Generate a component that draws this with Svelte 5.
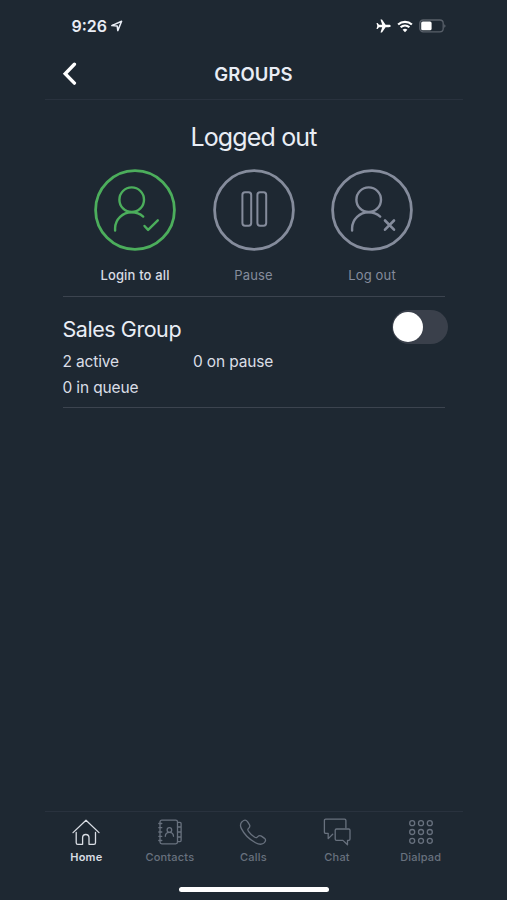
<script lang="ts">
  type Action = { id: string; label: string; tone: string };
  type Group = { name: string; active: number; paused: number; queued: number; enabled: boolean };

  const actions: Action[] = [
    { id: 'login', label: 'Login to all', tone: 'primary' },
    { id: 'pause', label: 'Pause', tone: 'muted' },
    { id: 'logout', label: 'Log out', tone: 'muted' },
  ];

  const tabs = ['Home', 'Contacts', 'Calls', 'Chat', 'Dialpad'];
  const dots = [5.2, 14, 22.8];

  let groups: Group[] = $state([
    { name: 'Sales Group', active: 2, paused: 0, queued: 0, enabled: false },
  ]);
  let currentTab = $state('Home');
</script>

<div class="screen">
  <div class="phone">
    <div class="status-bar">
      <div class="time">
        <span>9:26</span>
        <svg width="12" height="12" viewBox="0 0 12 12">
          <path d="M.8 5.6 10.6 1.3 6.8 10.6 6.200 6Z" />
        </svg>
      </div>
      <div class="indicators">
        <svg class="plane" width="15" height="14" viewBox="0 0 15 14">
          <path d="M14.7 7c0-.8-.8-1.2-1.8-1.2H9.6L6 .4H4.5l1.7 5.4H3L1.6 4H.5l.8 3-.8 3h1.1L3 8.2h3.2l-1.7 5.4H6l3.6-5.4h3.3c1 0 1.8-.4 1.8-1.2z" />
        </svg>
        <svg class="wifi" width="16" height="13" viewBox="0 0 16 13">
          <path d="M1.1 4.6C5 .9 11 .9 14.9 4.6M3.6 7.3c2.5-2.3 6.3-2.3 8.8 0" />
          <path class="fill" d="M8 12.2 5.6 9.7c1.4-1.2 3.4-1.2 4.8 0z" />
        </svg>
        <svg class="battery" width="27" height="14" viewBox="0 0 27 14">
          <rect class="case" x=".8" y="1" width="23.4" height="11.8" rx="3.4" />
          <rect class="level" x="2.2" y="2.5" width="10.4" height="8.8" rx="1.6" />
          <path class="cap" d="M25.2 5.2c1.8.5 1.8 3 0 3.5z" />
        </svg>
      </div>
    </div>

    <header>
      <button class="back" aria-label="Back">
        <svg width="16" height="24" viewBox="0 0 16 24">
          <path d="M13.4 2.300 4.200 11.700l9.200 9.400" />
        </svg>
      </button>
      <h1>GROUPS</h1>
    </header>

    <main>
      <h2>Logged out</h2>

      <div class="actions">
        {#each actions as action}
          <button class="action {action.tone}">
            <svg width="82" height="82" viewBox="0 0 82 82">
              <circle class="ring" cx="41" cy="41" r="39.4" />
              {#if action.id === 'pause'}
                <rect class="bar" x="29.4" y="23.3" width="8.8" height="33.4" rx="2.6" />
                <rect class="bar" x="44.4" y="23.3" width="8.8" height="33.4" rx="2.6" />
              {:else}
                <circle cx="37.7" cy="30.7" r="12.3" />
                <path d="M21.1 61.5V59c.3-8.7 7.5-15.7 16.6-15.7 4.3 0 8.3 1.5 11.5 4.3" />
                {#if action.id === 'login'}
                  <path d="m50.5 57 3.600 3.900 9.700-9.600" />
                {:else}
                  <path class="cross" d="m54 51.500 9 9.200m0-9.200-9 9.200" />
                {/if}
              {/if}
            </svg>
            <span>{action.label}</span>
          </button>
        {/each}
      </div>

      {#each groups as group}
        <section class="group">
          <div class="group-head">
            <h3>{group.name}</h3>
            <button
              class="switch"
              class:on={group.enabled}
              role="switch"
              aria-checked={group.enabled}
              aria-label={group.name}
              onclick={() => (group.enabled = !group.enabled)}
            >
              <span class="knob"></span>
            </button>
          </div>
          <div class="stats">
            <span>{group.active} active</span>
            <span>{group.paused} on pause</span>
            <span>{group.queued} in queue</span>
          </div>
        </section>
      {/each}
    </main>

    <nav>
      {#each tabs as tab}
        <button class="tab" class:current={currentTab === tab} onclick={() => (currentTab = tab)}>
          <svg width="28" height="28" viewBox="0 0 28 28">
            {#if tab === 'Home'}
              <path d="M1 14.6 14 2.2l13 12.4M4.2 14.500v10.200c0 1 .6 1.600 1.600 1.600h4.800v-6.500c0-4.400 6.400-4.400 6.400 0v6.500h4.900c1 0 1.600-.6 1.600-1.600V14.500" />
            {:else if tab === 'Contacts'}
              <rect x="4" y="2.2" width="17.5" height="23.6" rx="1.8" />
              <path d="M21.500 4.300H24c.7 0 1.100.4 1.100 1.100v17.200c0 .7-.4 1.100-1.100 1.100h-2.500M21.500 9h3.600m-3.600 5h3.600m-3.600 5h3.600M2.800 5.500h3m-3 4.200h3M2.800 14h3m-3 4.300h3m-3 4.200h3" />
              <circle cx="13.4" cy="12" r="2.3" />
              <path d="M9.3 18.3c.2-5.3 8-5.3 8.2 0" />
            {:else if tab === 'Calls'}
              <path d="M3.2 3.6C5.3 1.5 7 1.7 8.500 3.700l1.900 2.900c1.300 2.100-.1 3-1.300 4.300-.6.700-.3 1.500.6 2.700 1.400 2 3.500 4 5.700 5.400 1.100.7 2 .9 2.700.2 1.300-1.200 2.300-2.500 4.300-1.100l2.800 2c2 1.500 1.600 3 .2 4.500-2.300 2.300-5.200 2.100-8.900.1C10.200 21.400 5 16 2.300 10.400.9 7.500 1 5.600 3.200 3.600z" />
            {:else if tab === 'Chat'}
              <path d="M9.7 16.3 5.2 20.6V15.300H2.700c-.9 0-1.300-.5-1.300-1.300V2.500c0-.8.5-1.300 1.300-1.300h18.900c.8 0 1.300.5 1.300 1.300v7.300" />
              <path d="M13.5 11h12.200c.8 0 1.300.5 1.300 1.300v8.800c0 .8-.5 1.300-1.300 1.300h-1.200v4.400l-4.600-4.400h-6.400c-.8 0-1.300-.5-1.300-1.300v-8.800c0-.8.5-1.300 1.300-1.300z" />
            {:else}
              {#each dots as cy}
                {#each dots as cx}
                  <circle {cx} {cy} r="2.5" />
                {/each}
              {/each}
            {/if}
          </svg>
          <span>{tab}</span>
        </button>
      {/each}
    </nav>
    <div class="home-indicator"></div>
  </div>
</div>

<style>
  :global(body) {
    background: #1e2832;
  }

  .screen {
    display: flex;
    justify-content: center;
    height: 900px;
    overflow: hidden;
    background: #1e2832;
    color: #e9edf5;
    font-family: Inter, 'Liberation Sans', sans-serif;
  }

  .phone {
    display: flex;
    flex-direction: column;
    width: 418px;
  }

  svg {
    display: block;
    fill: none;
    stroke: currentColor;
    stroke-linecap: round;
    stroke-linejoin: round;
  }

  button {
    padding: 0;
    border: 0;
    background: none;
    color: inherit;
    font: inherit;
    cursor: pointer;
  }

  h1,
  h2,
  h3 {
    margin: 0;
  }

  .status-bar {
    display: flex;
    flex: none;
    align-items: center;
    justify-content: space-between;
    height: 52px;
    padding: 0 17px 0 27px;
    box-sizing: border-box;
  }

  .time {
    display: flex;
    align-items: center;
    gap: 4px;
    font-size: 16px;
    font-weight: 600;
  }

  .time svg {
    stroke-width: 1.5;
  }

  .indicators {
    display: flex;
    align-items: center;
    gap: 6px;
    color: #fff;
  }

  .plane,
  .wifi .fill,
  .battery .level {
    fill: currentColor;
    stroke: none;
  }

  .wifi {
    stroke-width: 2.1;
    stroke-linecap: butt;
  }

  .battery .case {
    stroke: #59606a;
    stroke-width: 1.3;
  }

  .battery .cap {
    fill: #59606a;
    stroke: none;
  }

  header {
    display: grid;
    flex: none;
    grid-template-columns: 60px 1fr 60px;
    align-items: center;
    height: 48px;
    padding-bottom: 3px;
    box-sizing: border-box;
    border-bottom: 1px solid #29323e;
  }

  .back {
    padding-left: 16px;
    color: #fff;
  }

  .back svg {
    stroke-width: 3.4;
    stroke-linejoin: miter;
  }

  h1 {
    font-size: 18.5px;
    font-weight: 600;
    letter-spacing: 0.1px;
    line-height: 22px;
    text-align: center;
  }

  main {
    flex: 1;
    padding: 0 18px;
  }

  h2 {
    padding-top: 21px;
    font-size: 25px;
    font-weight: 400;
    letter-spacing: -0.85px;
    line-height: 32px;
    text-align: center;
  }

  .actions {
    display: grid;
    grid-template-columns: repeat(3, 118.5px);
    justify-content: center;
    height: 144px;
    padding-top: 16px;
    box-sizing: border-box;
    border-bottom: 1px solid #3c444f;
  }

  .action {
    display: flex;
    flex-direction: column;
    align-items: center;
    gap: 15px;
    color: #858c9c;
    font-size: 13px;
    line-height: 18px;
  }

  .action svg {
    stroke-width: 2.4;
  }

  .action .ring {
    stroke-width: 2.8;
  }

  .action .bar {
    stroke-width: 2;
  }

  .action .cross {
    stroke-width: 2.6;
  }

  .action span {
    letter-spacing: 0.15px;
  }

  .action.primary {
    color: #4cae5c;
  }

  .action.primary span {
    color: #d8dce3;
    font-weight: 500;
  }

  .group {
    height: 111px;
    box-sizing: border-box;
    border-bottom: 1px solid #3c444f;
  }

  .group-head {
    display: flex;
    justify-content: space-between;
    height: 52px;
    padding-top: 13px;
    box-sizing: border-box;
    margin-right: -3px;
  }

  h3 {
    padding-top: 5px;
    font-size: 21.5px;
    font-weight: 400;
    letter-spacing: -0.45px;
    line-height: 28px;
  }

  .switch {
    width: 56px;
    height: 34px;
    padding: 2px 1px;
    box-sizing: border-box;
    border-radius: 17px;
    background: #3a404b;
  }

  .switch.on {
    background: #4cae5c;
  }

  .knob {
    display: block;
    width: 30px;
    height: 30px;
    border-radius: 50%;
    background: #fff;
  }

  .switch.on .knob {
    margin-left: 24px;
  }

  .stats {
    display: grid;
    grid-template-columns: 130.5px 1fr;
    color: #dadee6;
    font-size: 15.5px;
    letter-spacing: -0.15px;
    line-height: 25.5px;
  }

  nav {
    display: flex;
    flex: none;
    height: 75px;
    border-top: 1px solid #29323e;
  }

  .tab {
    display: flex;
    flex: 1;
    flex-direction: column;
    align-items: center;
    gap: 3px;
    padding-top: 6px;
    color: #68717e;
    font-size: 11px;
    font-weight: 500;
    letter-spacing: 0.2px;
    line-height: 16px;
  }

  .tab svg {
    stroke-width: 1.3;
  }

  .tab.current {
    color: #d9dde4;
    font-weight: 600;
  }

  .home-indicator {
    flex: none;
    align-self: center;
    width: 150px;
    height: 5px;
    margin-bottom: 8px;
    border-radius: 3px;
    background: #fff;
  }
</style>
